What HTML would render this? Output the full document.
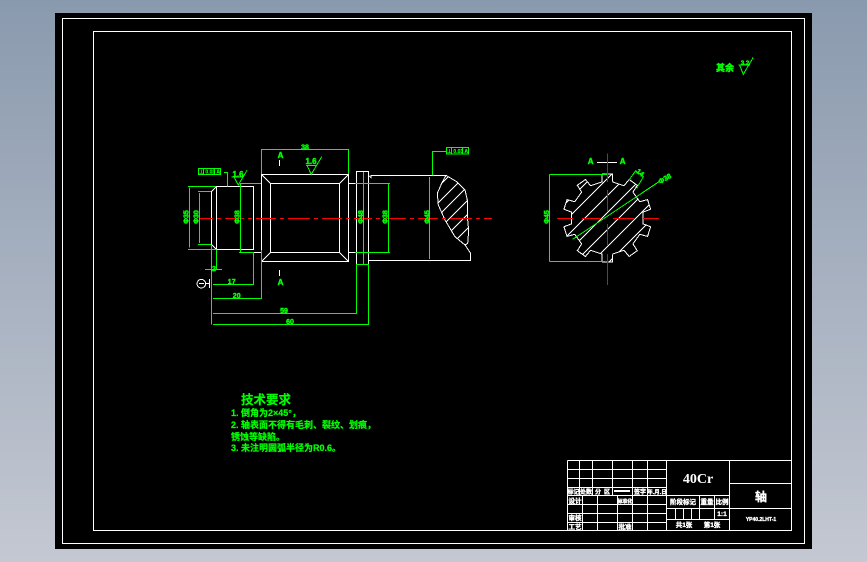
<!DOCTYPE html>
<html>
<head>
<meta charset="utf-8">
<style>
html,body{margin:0;padding:0;width:867px;height:562px;overflow:hidden;background:linear-gradient(#8a9aae,#c4c8d2);}
svg{position:absolute;left:0;top:0;display:block;}
text{font-family:"Liberation Sans","Noto Sans CJK SC",sans-serif;}
.g{fill:#0f0;stroke:#0f0;stroke-width:.45;font-weight:bold;font-size:7px;text-anchor:middle;}
.t{fill:#fff;stroke:#fff;stroke-width:.35;font-weight:bold;font-size:6px;text-anchor:middle;}
.c{fill:#0f0;stroke:#0f0;stroke-width:.25;font-weight:bold;font-size:9px;}
</style>
</head>
<body>
<svg width="867" height="562" viewBox="0 0 867 562" xmlns="http://www.w3.org/2000/svg" shape-rendering="crispEdges">
<defs>
<clipPath id="gearclip"><polygon points="601.8,182 602.3,174 612.3,174 612.8,182 624,185.7 629.15,179.5 637.25,185.3 632.95,192.1 639.8,201.7 647.55,199.6 650.65,209.2 643.2,212.1 643.2,223.9 650.65,226.8 647.55,236.4 639.8,234.3 632.95,243.9 637.25,250.7 629.15,256.5 624,250.3 612.8,254 612.3,262 602.3,262 601.8,254 590.6,250.3 585.45,256.5 577.35,250.7 581.65,243.9 574.8,234.3 567.05,236.4 563.95,226.8 571.4,223.9 571.4,212.1 563.95,209.2 567.05,199.6 574.8,201.7 581.65,192.1 577.35,185.3 585.45,179.5 590.6,185.7"/></clipPath>
<clipPath id="brk"><polygon points="446,175.3 456.7,181.7 465,190 467.3,200 467.3,216.7 468.7,230 467.7,243.3 465,245 455,236.7 445,220 438.3,205 437.3,193.3 441.7,183.3"/></clipPath>
</defs>
<rect x="55" y="13" width="757" height="536" fill="#000"/>
<g fill="none" stroke="#fff" stroke-width="1">
<rect x="62.5" y="18.5" width="742" height="525"/>
<rect x="93.5" y="31.5" width="698" height="499"/>
</g>

<!-- Shaft white -->
<g fill="none" stroke="#fff" stroke-width="1">
<path d="M216.5 186.5H253.5V249.5H216.5ZM216.5 186.5L211.5 191.5V244.5L216.5 249.5"/>
<path d="M253.5 183.5H261.5M253.5 252.5H261.5M348.5 183.5H356.5M348.5 252.5H356.5"/>
<rect x="261.5" y="174.5" width="87" height="87"/>
<rect x="270.5" y="183.5" width="69" height="69"/>
<path d="M261.5 174.5L270.5 183.5M348.5 174.5L339.5 183.5M261.5 261.5L270.5 252.5M348.5 261.5L339.5 252.5"/>
<path d="M356.5 171.5H368.5V264.5H356.5Z"/>
<path d="M368.5 175.5L371 177.5V175.5H446M368.5 260.5H470.5V253L465 245"/>
<path d="M446 175.3L456.7 181.7 465 190 467.3 200V216.7L468.7 230 467.7 243.3 465 245 455 236.7 445 220 438.3 205 437.3 193.3 441.7 183.3 446 175.3"/>
<g clip-path="url(#brk)">
<path d="M475 150L425 200M491 150L431 210M504 150L434 220M518 150L438 230M532 150L442 240M546 150L446 250"/>
</g>
<path d="M279.5 160V166M279.5 270V276M597 162.5H617"/>
<circle cx="201.3" cy="283.7" r="4.3"/>
<path d="M199 283.7H204M206 283.7H209.5M209.5 279V288"/>
</g>
<!-- Gear -->
<g fill="none" stroke="#fff" stroke-width="1">
<polygon points="601.8,182 602.3,174 612.3,174 612.8,182 624,185.7 629.15,179.5 637.25,185.3 632.95,192.1 639.8,201.7 647.55,199.6 650.65,209.2 643.2,212.1 643.2,223.9 650.65,226.8 647.55,236.4 639.8,234.3 632.95,243.9 637.25,250.7 629.15,256.5 624,250.3 612.8,254 612.3,262 602.3,262 601.8,254 590.6,250.3 585.45,256.5 577.35,250.7 581.65,243.9 574.8,234.3 567.05,236.4 563.95,226.8 571.4,223.9 571.4,212.1 563.95,209.2 567.05,199.6 574.8,201.7 581.65,192.1 577.35,185.3 585.45,179.5 590.6,185.7"/>
<g clip-path="url(#gearclip)">
<path d="M619 150L489 280M636 150L506 280M653 150L523 280M670 150L540 280M687 150L557 280M704 150L574 280M721 150L591 280M738 150L608 280"/>
</g>
</g>
<!-- Red centre lines -->
<g stroke="#f00" stroke-width="1" fill="none">
<path d="M200 218.5H213M217 218.5H221M225 218.5H244M248 218.5H252M256 218.5H276M280 218.5H284M288 218.5H310M314 218.5H318M322 218.5H342M346 218.5H350M354 218.5H372M376 218.5H380M384 218.5H406M410 218.5H414M418 218.5H438M442 218.5H446M450 218.5H472M476 218.5H480M484 218.5H492"/>
<path d="M557 218.5H573M582 218.5H601M613 218.5H634M643 218.5H659"/>
<path d="M607.5 153.5V182M607.5 190V212M607.5 224V246M607.5 254V285"/>
</g>
<!-- Green dims -->
<g fill="none" stroke="#0f0" stroke-width="1">
<path d="M188 186.5H216M188 249.5H216M189.5 187.5V247.5"/>
<path d="M198 191.5H211M198 244.5H211M199.5 193V243"/>
<path d="M240 183.5H261M239 252.5H254M240.5 183V252.5"/>
<path d="M224 172.5H227.5V186.5"/>
<rect x="198.5" y="168.5" width="22" height="6"/>
<path d="M203.5 168.5V174.5M214.5 168.5V174.5"/>
<path d="M261.5 149.5H348.5M261.5 149V174M348.5 149V174"/>
<path d="M363.5 172V264M356 264.5H368.5"/>
<path d="M355 183.5H390M355 252.5H390M388.5 184V252"/>
<path d="M429.5 177V259"/>
<path d="M432.5 175V151.5H446"/>
<rect x="446.5" y="147.5" width="22" height="6.5"/>
<path d="M451.5 147.5V154M462.5 147.5V154"/>
<path d="M211.5 245V324.5M216.5 249.5V270M205 269.5H222"/>
<path d="M213 284.5H253.5V252M213 298.5H261.5V250M213 313.5H356.5V264M213 324.5H368.5V264"/>
<path d="M549.5 174.5V261.5M549.5 174.5H607M549.5 261.5H605"/>
<path d="M231.7 177H242.7M234 177L238.3 185 247 170.3"/>
<path d="M306 165.5H316.7M307 165.5L311.3 174.3 321.7 156.7"/>
<path d="M738.5 65H750M739.5 65L743.3 74.3 753.3 57.3"/>
<path d="M572.7 239.3L660 181"/>
<path d="M629 180L635.7 170.7 643.3 176.7 636.7 188.3"/>
</g>
<!-- Green dim text -->
<text class="g" x="186" y="219.5" transform="rotate(-90 186 217)">Φ35</text>
<text class="g" x="196" y="219.5" transform="rotate(-90 196 217)">Φ30</text>
<text class="g" x="237" y="219.5" transform="rotate(-90 237 217)">Φ38</text>
<text class="g" x="360.5" y="219.5" transform="rotate(-90 360.5 217)">Φ48</text>
<text class="g" x="385" y="219.5" transform="rotate(-90 385 217)">Φ38</text>
<text class="g" x="427" y="219.5" transform="rotate(-90 427 217)">Φ45</text>
<text class="g" x="546.5" y="219.5" transform="rotate(-90 546.5 217)">Φ45</text>
<text class="g" x="305" y="149.5">38</text>
<text class="g" x="280.5" y="158" style="font-size:8px">A</text>
<text class="g" x="280.5" y="285" style="font-size:8px">A</text>
<text class="g" x="590.7" y="164" style="font-size:8px">A</text>
<text class="g" x="622.7" y="164" style="font-size:8px">A</text>
<text class="g" x="311" y="164" style="font-size:8px">1.6</text>
<text class="g" x="238" y="177" style="font-size:8px">1.6</text>
<text class="g" x="214" y="271">2</text>
<text class="g" x="231.7" y="284">17</text>
<text class="g" x="236.7" y="298">20</text>
<text class="g" x="284" y="313">59</text>
<text class="g" x="290" y="324">60</text>
<text class="g" x="209.5" y="173.5" style="font-size:5px;stroke-width:.2">⊥ 0.03 A</text>
<text class="g" x="457.5" y="153" style="font-size:5px;stroke-width:.2">⊥ 0.03 A</text>
<text class="g" x="640" y="175" transform="rotate(38 640 173)">14</text>
<text class="g" x="665" y="181" transform="rotate(-30 665 179)">Φ38</text>
<text class="g" x="725" y="71" style="font-size:9px">其余</text>
<text class="g" x="745" y="65" style="font-size:6px">3.2</text>

<!-- Tech text -->
<text x="241" y="404" style="fill:#0f0;stroke:#0f0;stroke-width:.2;font-size:12.5px;font-weight:bold;">技术要求</text>
<text class="c" x="231" y="416">1. 倒角为2×45°，</text>
<text class="c" x="231" y="428">2. 轴表面不得有毛刺、裂纹、划痕，</text>
<text class="c" x="231" y="440">锈蚀等缺陷。</text>
<text class="c" x="231" y="451">3. 未注明圆弧半径为R0.6。</text>

<!-- Title block -->
<g fill="none" stroke="#fff" stroke-width="1">
<path d="M567.5 460.5H791.5M567.5 460.5V530.5"/>
<path d="M567 469.5H666M567 478.5H666M567 487.5H666M567 495.5H666M567 504.5H666M567 513.5H666M567 522.5H666"/>
<path d="M579.5 460V495M592.5 460V495M612.5 460V495M632.5 460V530M647.5 460V530M666.5 460V530M729.5 460V530"/>
<path d="M582.5 496V530M597.5 496V530M617.5 496V530"/>
<path d="M666 495.5H729M666 508.5H791M666 519.5H729M729 483.5H791"/>
<path d="M699.5 496V519M714.5 496V519M675.5 508V519M683.5 508V519M691.5 508V519"/>
</g>
<text x="698" y="483" style="fill:#fff;font-family:'Liberation Serif',serif;font-weight:bold;font-size:14px;text-anchor:middle;">40Cr</text>
<text class="t" x="761" y="501" style="font-size:12px">轴</text>
<text class="t" x="761" y="521" style="font-size:5px">YP40.2LHT-1</text>
<text class="t" x="683" y="504" style="font-size:6.5px">阶段标记</text>
<text class="t" x="707" y="504" style="font-size:6.5px">重量</text>
<text class="t" x="722" y="504" style="font-size:6.5px">比例</text>
<text class="t" x="722" y="516" style="font-size:6.5px">1:1</text>
<text class="t" x="684" y="527" style="font-size:6.5px">共1张</text>
<text class="t" x="712" y="527" style="font-size:6.5px">第1张</text>
<text class="t" x="573.5" y="494" style="font-size:6px">标记</text>
<text class="t" x="586" y="494" style="font-size:6px">处数</text>
<text class="t" x="598" y="494" style="font-size:6px">分</text>
<text class="t" x="607" y="494" style="font-size:6px">区</text>
<rect x="614" y="490" width="16" height="2" fill="#fff"/>
<text class="t" x="640" y="494" style="font-size:6px">签字</text>
<text class="t" x="657" y="494" style="font-size:5.5px">年.月.日</text>
<text class="t" x="575" y="503" style="font-size:6.5px">设计</text>
<text class="t" x="625" y="503" style="font-size:5px">标准化</text>
<text class="t" x="575" y="520" style="font-size:6.5px">审核</text>
<text class="t" x="575" y="529" style="font-size:6.5px">工艺</text>
<text class="t" x="625" y="529" style="font-size:6.5px">批准</text>
</svg>
</body>
</html>
